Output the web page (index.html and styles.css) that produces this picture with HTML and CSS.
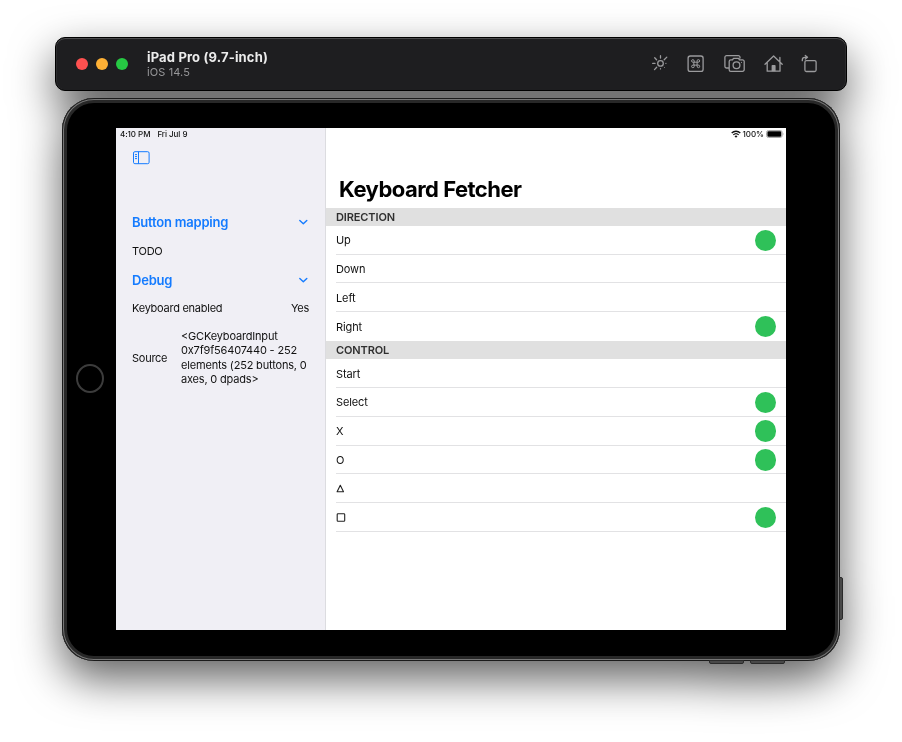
FILE: index.html
```html
<!DOCTYPE html>
<html lang="en">
<head>
<meta charset="utf-8">
<title>iPad Pro (9.7-inch)</title>
<link rel="stylesheet" href="styles.css">
</head>
<body>
<div class="simulator">
  <header class="titlebar">
    <div class="lights"><i class="red"></i><i class="yellow"></i><i class="green"></i></div>
    <div class="names"><strong>iPad Pro (9.7-inch)</strong><span>iOS 14.5</span></div>
    <svg class="tools" width="170" height="24" viewBox="0 0 170 24" fill="none" stroke="#9b9b9d" stroke-width="1.3" stroke-linecap="round" stroke-linejoin="round">
      <circle cx="10.500" cy="12.400" r="2.800"/>
      <path d="M10.500 7V4.700M14.200 8.700l2.600-2.600M6.600 8.800L4.700 6.800M5 12.400H2.700M6.700 16.200l-2.200 2.400M10.500 17.700v.2"/>
      <path stroke-width="1" d="M15.700 12.400h.4M14.200 16.200l.2.200"/>
      <rect x="38.100" y="5" width="15" height="15.400" rx="2.200"/>
      <path stroke-width="1" d="M44.200 11.200h2.900v2.900h-2.900zM44.200 11.200h-1.100a1.300 1.300 0 1 1 1.100-1.300zM47.100 11.200V9.900a1.300 1.300 0 1 1 1.100 1.300zM47.100 14.100h1.100a1.300 1.300 0 1 1-1.100 1.300zM44.200 14.100v1.300a1.300 1.300 0 1 1-1.100-1.300z"/>
      <path d="M78.300 17h-1.700a1.700 1.700 0 0 1-1.700-1.700V6.300a1.700 1.700 0 0 1 1.700-1.700h11.700a1.700 1.700 0 0 1 1.700 1.700v.7M80.800 8.900h1.700l1-1.600h5l1 1.600h3.100a1.600 1.600 0 0 1 1.600 1.600v8.200a1.600 1.600 0 0 1-1.600 1.600H80.800a1.600 1.600 0 0 1-1.600-1.600v-8.200a1.600 1.600 0 0 1 1.600-1.600z"/>
      <circle cx="86.500" cy="14.200" r="3.400"/>
      <circle cx="91.500" cy="11.300" r=".6" fill="#9b9b9d" stroke="none"/>
      <path d="M115 13.300l8.600-8.300 8.600 8.300M117.200 11.500v8.700h12.800v-8.700M129.900 10.700V6.400"/>
      <path fill="#9b9b9d" stroke="none" d="M121.600 20.200v-5.400q0-.8.800-.8h2.400q.8 0 .8.800v5.400z"/>
      <rect x="154.900" y="9.600" width="11.200" height="10.900" rx="1.500"/>
      <path d="M152.300 9.700V8.900a2.600 2.600 0 0 1 2.600-2.600h2.300M155.300 4.500l2.200 1.800-2.200 1.800"/>
    </svg>
  </header>
  <div class="ipad">
    <i class="power"></i><i class="volume up"></i><i class="volume down"></i>
    <div class="home"></div>
    <main class="screen">
      <aside class="sidebar">
        <div class="status"><span>4:10 PM</span><span>Fri Jul 9</span></div>
        <svg class="toggle" width="18" height="14" viewBox="0 0 18 14" fill="none" stroke="#147bff" stroke-width="1"><rect x="1.500" y=".7" width="15.600" height="12" rx="1.400"/><path d="M6.500.7v12M3 3.600h2M3 5.600h2M3 7.600h2"/></svg>
        <h2>Button mapping<svg width="10" height="6" viewBox="0 0 10 6"><path d="M1.800 1.400L5.300 4.700 8.800 1.400"/></svg></h2>
        <div class="item"><span>TODO</span></div>
        <h2 class="debug">Debug<svg width="10" height="6" viewBox="0 0 10 6"><path d="M1.800 1.400L5.300 4.700 8.800 1.400"/></svg></h2>
        <div class="item"><span>Keyboard enabled</span><span>Yes</span></div>
        <div class="item source"><span>Source</span><p>&lt;GCKeyboardInput<br>0x7f9f56407440 - 252<br>elements (252 buttons, 0<br>axes, 0 dpads&gt;</p></div>
      </aside>
      <section class="detail">
        <div class="status right">
          <svg width="10" height="8" viewBox="0 0 10 8" fill="none" stroke="#111" stroke-width="1.300"><path d="M.7 3a6.200 6.200 0 0 1 8.600 0M2.300 4.900a3.900 3.900 0 0 1 5.400 0"/><path fill="#111" stroke="none" d="M5 7.700L3.500 6.200a2.100 2.100 0 0 1 3 0z"/></svg>
          <span>100%</span>
          <svg width="18" height="8" viewBox="0 0 18 8"><rect x=".5" y=".5" width="15.700" height="7" rx="2" fill="#fff" stroke="#aaa"/><rect x="1.400" y="1.200" width="13.900" height="5.600" rx="1.200" fill="#000"/><path d="M17 2.800q1 1.200 0 2.400z" fill="#999"/></svg>
        </div>
        <h1>Keyboard Fetcher</h1>
        <h3>DIRECTION</h3>
        <ul>
          <li>Up<i></i></li>
          <li>Down</li>
          <li>Left</li>
          <li>Right<i></i></li>
        </ul>
        <h3>CONTROL</h3>
        <ul class="control">
          <li>Start</li>
          <li>Select<i></i></li>
          <li>X<i></i></li>
          <li>O<i></i></li>
          <li><svg width="9" height="9" viewBox="0 0 9 9"><path d="M4.300 1.300L7.500 7.700H1.100z"/></svg></li>
          <li><svg width="10" height="9" viewBox="0 0 10 9"><rect x="1.200" y=".8" width="7.500" height="7.500" rx=".8"/></svg><i></i></li>
        </ul>
      </section>
    </main>
  </div>
</div>
</body>
</html>
```
FILE: styles.css
```css
* { box-sizing: border-box; }
body {
  margin: 0;
  width: 902px;
  height: 742px;
  overflow: hidden;
  background: #fff;
  font-family: Inter, "Liberation Sans", sans-serif;
}
i { display: block; }
h1, h2, h3, p, ul { margin: 0; padding: 0; }

.simulator {
  display: flex;
  flex-direction: column;
  align-items: center;
  gap: 7px;
  padding-top: 37px;
  filter: drop-shadow(0 18px 22px rgba(0, 0, 0, .62));
}
.titlebar {
  display: flex;
  align-items: center;
  width: 792px;
  height: 54px;
  padding: 0 26px 0 20px;
  border: 1px solid #000;
  border-radius: 10px;
  background: #1e1e20;
  box-shadow: inset 0 1px 0 #4b4b4d, inset 1px 0 0 #2c2c2e, inset -1px 0 0 #2c2c2e;
}
.lights { display: flex; gap: 8px; margin-right: 19px; }
.lights i { width: 12px; height: 12px; border-radius: 50%; }
.red { background: #ff5150; }
.yellow { background: #ffb135; }
.green { background: #26c943; }
.names { display: flex; flex-direction: column; }
.names strong { font-size: 13px; line-height: 15px; letter-spacing: .16px; color: #ececec; }
.names span { font-size: 11px; line-height: 14px; letter-spacing: .1px; color: #98989a; }
.tools { margin: 0 0 2px auto; }

.ipad {
  position: relative;
  display: flex;
  align-items: center;
  width: 778px;
  height: 563px;
  padding: 0 13px 2px 14px;
  border-radius: 32px;
  background: #000;
  box-shadow: inset 0 0 0 1px #1b1b1b, inset 0 0 0 2px #777, inset 0 0 0 5px #282828;
}
.home {
  width: 28px;
  height: 29px;
  border: 2px solid #3c3c3c;
  border-radius: 50%;
}
.power, .volume { position: absolute; background: #484848; border: 1px solid #2a2a2a; }
.power { right: -3px; top: 479px; width: 4px; height: 43px; border-radius: 0 2px 2px 0; }
.volume { bottom: -3px; width: 35px; height: 4px; border-radius: 0 0 2px 2px; }
.up { left: 647px; }
.down { left: 688px; }

.screen {
  display: flex;
  width: 670px;
  height: 502px;
  margin-left: 12px;
  background: #fff;
  color: #111;
  font-size: 11px;
  letter-spacing: -.12px;
}
.sidebar {
  width: 210px;
  border-right: 1px solid #dcdce0;
  padding: 0 16px;
  background: #f0eff5;
}
.status {
  display: flex;
  align-items: center;
  gap: 7px;
  height: 13px;
  font-size: 8px;
  font-weight: 500;
  letter-spacing: -.05px;
}
.sidebar .status { margin-left: -12px; }
.toggle { display: block; margin: 10px 0 0 0; }
h2 {
  display: flex;
  align-items: center;
  justify-content: space-between;
  height: 28.800px;
  font-size: 13px;
  font-weight: 600;
  letter-spacing: -.22px;
  color: #147bff;
}
.toggle + h2 { margin-top: 43px; }
h2 svg { margin-right: 1px; fill: none; stroke: #147bff; stroke-width: 1.400; stroke-linecap: round; stroke-linejoin: round; }
.item { display: flex; align-items: center; justify-content: space-between; height: 28.800px; letter-spacing: -.26px; white-space: nowrap; }
.debug { padding-top: 1px; }
.item > span:last-child { letter-spacing: -.3px; }
.item > span:first-child { letter-spacing: -.26px; }
.source { justify-content: flex-start; height: 70px; }
.source span { width: 49px; flex: none; }
.source p { line-height: 14.400px; letter-spacing: -.18px; }

.detail { flex: 1; display: flex; flex-direction: column; }
.right { justify-content: flex-end; gap: 2px; padding-right: 2px; }
h1 { height: 67px; margin-left: 13px; padding-top: 35px; font-size: 22px; line-height: 27px; font-weight: 700; letter-spacing: -.52px; color: #000; }
h3 {
  display: flex;
  align-items: center;
  height: 18.400px;
  padding-left: 10px;
  background: #e0e0e0;
  font-size: 11px;
  font-weight: 600;
  letter-spacing: -.12px;
  color: #303030;
}
ul { list-style: none; padding-left: 10px; }
li {
  display: flex;
  align-items: center;
  justify-content: space-between;
  height: 28.750px;
  padding: 1px 10px 0 0;
  border-bottom: 1px solid #e2e2e4;
}
ul:not(.control) li:last-child { border-bottom-color: transparent; }
li i { width: 21.500px; height: 21.500px; border-radius: 50%; background: #2fc159; }
li svg { fill: none; stroke: #222; stroke-width: 1.100; stroke-linejoin: round; }
```
